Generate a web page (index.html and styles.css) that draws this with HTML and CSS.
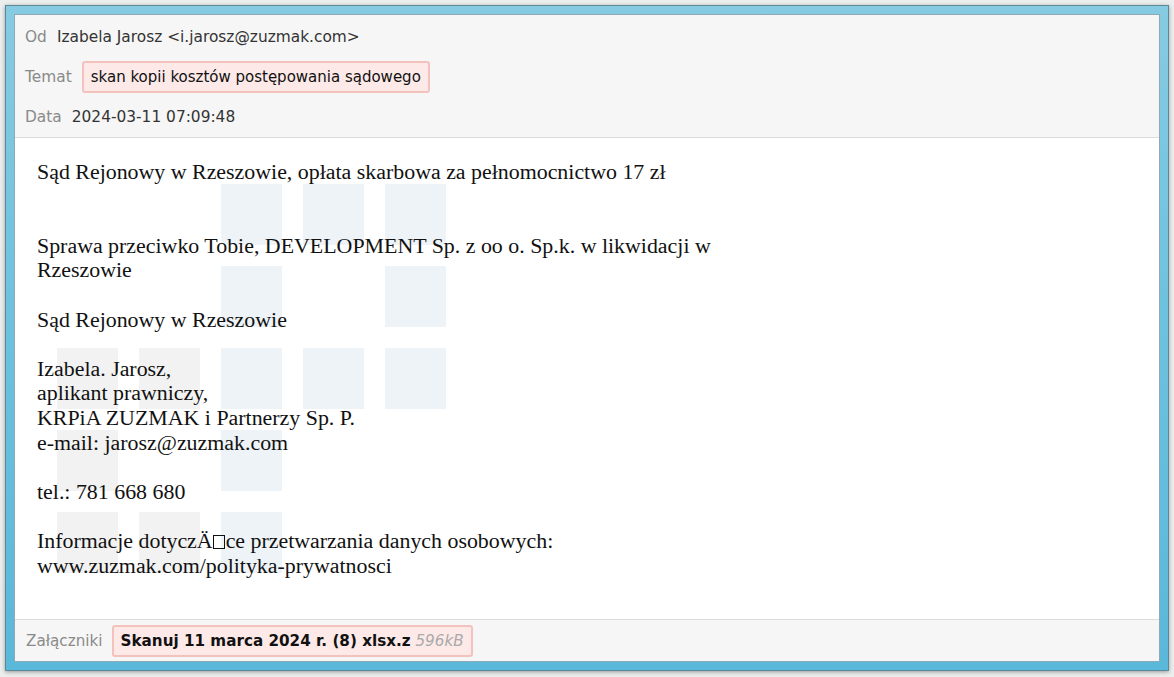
FILE: index.html
```html
<!DOCTYPE html>
<html lang="pl">
<head>
<meta charset="utf-8">
<title>Wiadomość</title>
<link rel="stylesheet" href="styles.css">
</head>
<body>
<div class="window">
  <div class="mail">
    <div class="header">
      <div class="row"><span class="label">Od</span><span class="value">Izabela Jarosz &lt;i.jarosz@zuzmak.com&gt;</span></div>
      <div class="row"><span class="label">Temat</span><span class="value pill">skan kopii kosztów postępowania sądowego</span></div>
      <div class="row"><span class="label">Data</span><span class="value">2024-03-11 07:09:48</span></div>
    </div>
    <div class="body">
      <div class="watermark" aria-hidden="true">
        <i></i><i></i><i class="b"></i><i class="b"></i><i class="b"></i>
        <i></i><i></i><i class="b"></i><i></i><i class="b"></i>
        <i class="g"></i><i class="g"></i><i class="b"></i><i class="b"></i><i class="b"></i>
        <i class="g"></i><i></i><i class="b"></i><i></i><i></i>
        <i class="g"></i><i class="g"></i><i class="b"></i><i></i><i></i>
      </div>
      <div class="text">
        <p>Sąd Rejonowy w Rzeszowie, opłata skarbowa za pełnomocnictwo 17 zł<br><br><br>Sprawa przeciwko Tobie, DEVELOPMENT Sp. z oo o. Sp.k. w likwidacji w Rzeszowie<br><br>Sąd Rejonowy w Rzeszowie<br><br>Izabela. Jarosz,<br>aplikant prawniczy,<br>KRPiA ZUZMAK i Partnerzy Sp. P.<br>e-mail: jarosz@zuzmak.com<br><br>tel.: 781 668 680<br><br>Informacje dotyczÄ<span class="missing"></span>ce przetwarzania danych osobowych:<br>www.zuzmak.com/polityka-prywatnosci</p>
      </div>
    </div>
    <div class="footer">
      <span class="label">Załączniki</span>
      <span class="attach"><b>Skanuj 11 marca 2024 r. (8) xlsx.z</b> <em>596kB</em></span>
    </div>
  </div>
</div>
</body>
</html>
```
FILE: styles.css
```css
* { box-sizing: border-box; }
html, body { margin: 0; }
body {
  width: 1174px;
  height: 677px;
  padding: 5px 5px 6px 5px;
  background: #eceded;
  font-family: "DejaVu Sans", Verdana, sans-serif;
}
.window {
  height: 666px;
  border: 1px solid #5d8899;
  background: linear-gradient(180deg, #86cbe2 0%, #6cc1de 50%, #5ab8da 100%);
  padding: 8px;
  box-shadow: 0 1px 4px rgba(0,0,0,0.35);
}
.mail {
  height: 100%;
  display: flex;
  flex-direction: column;
  background: #fff;
  border: 1px solid #8ca9b4;
}
.header {
  background: #f6f6f6;
  border-bottom: 1px solid #dcdcdc;
  padding: 2px 0 0 10px;
}
.row {
  height: 40px;
  display: flex;
  align-items: center;
  gap: 10px;
  font-size: 15.4px;
}
.label { color: #8a8a8a; }
.value { color: #333; }
.pill {
  color: #111;
  font-size: 15px;
  background: #fde9e7;
  border: 2px solid #f4c2bc;
  border-radius: 3px;
  padding: 5px 7px;
}
.body {
  flex: 1;
  position: relative;
  padding: 22px 0 0 22px;
}
.watermark {
  position: absolute;
  left: 42px;
  top: 46px;
  display: grid;
  grid-template-columns: repeat(5, 61px);
  grid-auto-rows: 61px;
  gap: 21px;
}
.watermark i { display: block; }
.watermark .g { background: #f2f2f2; }
.watermark .b { background: #eef3f7; }
.text {
  position: relative;
  width: 740px;
  font-family: "Liberation Serif", "Times New Roman", serif;
  font-size: 21.9px;
  line-height: 24.6px;
  color: #111;
}
.text p { margin: 0; }
.missing {
  display: inline-block;
  width: 12px;
  height: 14px;
  border: 1.5px solid #111;
  vertical-align: -1px;
  margin: 0 1px 0 0;
}
.footer {
  height: 42px;
  background: #f6f6f6;
  border-top: 1px solid #dcdcdc;
  display: flex;
  align-items: center;
  gap: 9px;
  padding-left: 11px;
  font-size: 15.2px;
}
.attach {
  background: #fde9e7;
  border: 2px solid #f4c2bc;
  border-radius: 3px;
  padding: 5px 7px;
  color: #111;
}
.attach b { font-weight: bold; }
.attach em { color: #aaa; font-style: italic; font-weight: normal; }
```
